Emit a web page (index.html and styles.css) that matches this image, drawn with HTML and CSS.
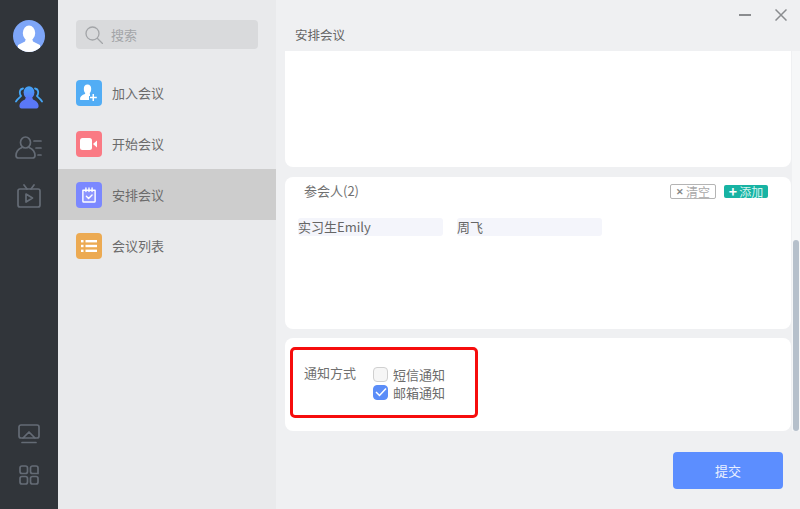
FILE: index.html
```html
<!DOCTYPE html>
<html lang="zh">
<head>
<meta charset="utf-8">
<title>安排会议</title>
<link rel="stylesheet" href="styles.css">
</head>
<body>
<div class="app">
  <nav class="rail">
    <svg class="avatar" viewBox="0 0 32 32" width="32" height="32">
      <defs><clipPath id="ac"><circle cx="16" cy="16" r="16"/></clipPath></defs>
      <circle cx="16" cy="16" r="16" fill="#7ea6f8"/>
      <g clip-path="url(#ac)" fill="#fff">
        <ellipse cx="16" cy="13" rx="6.2" ry="7.6"/>
        <path d="M13 18h6l1 3.500 7 3.500 1 7H4l1-7 7-3.500z"/>
      </g>
    </svg>
    <svg class="rail-icon first" viewBox="0 0 28 24" width="28" height="24">
      <defs><linearGradient id="pg" x1="0" y1="0" x2="0" y2="1"><stop offset="0" stop-color="#43a4f5"/><stop offset="1" stop-color="#5a78f8"/></linearGradient></defs>
      <path d="M8 2.500C4.500 3 4 7 6 10 4.500 12 2.500 13 1 15.500" fill="none" stroke="#45a5f5" stroke-width="1.800" stroke-linecap="round"/>
      <path d="M20 2.500C23.500 3 24 7 22 10 23.500 12 25.500 13 27 15.500" fill="none" stroke="#45a5f5" stroke-width="1.800" stroke-linecap="round"/>
      <ellipse cx="14" cy="6.500" rx="5.400" ry="6.200" fill="url(#pg)"/>
      <path d="M11 11h6l1 2.500c3 1 5 3 5.500 5.500.4 2-.5 3.500-2 3.500h-15c-1.500 0-2.400-1.500-2-3.500.5-2.500 2.500-4.500 5.500-5.500z" fill="#5a78f8"/>
    </svg>
    <svg class="rail-icon second" viewBox="0 0 28 24" width="28" height="24" fill="none" stroke="#646b75" stroke-width="1.700" stroke-linecap="round">
      <ellipse cx="10.500" cy="6.500" rx="5" ry="5.500"/>
      <path d="M7 11.500C3.500 13 1 15.500 1 19.500c0 1.800 1 2.500 2.500 2.500h14c1.500 0 2.500-.7 2.500-2.500 0-4-2.500-6.500-6-8"/>
      <path d="M19 5h7M21 12h5M23 19h3"/>
    </svg>
    <svg class="rail-icon third" viewBox="0 0 24 24" width="24" height="24" fill="none" stroke="#646b75" stroke-width="1.700" stroke-linecap="round" stroke-linejoin="round">
      <rect x="1" y="5" width="22" height="18" rx="2"/>
      <path d="M7 1l3 4M17 1l-3 4"/>
      <path d="M9 10l6.500 4-6.500 4z"/>
    </svg>
    <div class="rail-spacer"></div>
    <svg class="rail-icon cast" viewBox="0 0 22 20" width="22" height="20" fill="none" stroke="#646b75" stroke-width="1.700" stroke-linecap="round" stroke-linejoin="round">
      <path d="M5 14H3a2 2 0 0 1-2-2V3a2 2 0 0 1 2-2h16a2 2 0 0 1 2 2v9a2 2 0 0 1-2 2h-2"/>
      <path d="M5 14l6-6 6 6z"/>
      <path d="M4 18.500h14"/>
    </svg>
    <svg class="rail-icon apps" viewBox="0 0 20 20" width="20" height="20" fill="none" stroke="#646b75" stroke-width="1.700">
      <rect x="1" y="1" width="7.500" height="7.500" rx="2"/>
      <path d="M11.500 3a2 2 0 0 1 2-2H17a2 2 0 0 1 2 2v5.500h-5.500a2 2 0 0 1-2-2z"/>
      <rect x="1" y="11.500" width="7.500" height="7.500" rx="2"/>
      <rect x="11.500" y="11.500" width="7.500" height="7.500" rx="2"/>
    </svg>
  </nav>

  <aside class="side">
    <div class="search">
      <svg viewBox="0 0 18 18" width="18" height="18" fill="none" stroke="#a3a5a8" stroke-width="1.300" stroke-linecap="round">
        <circle cx="7.500" cy="7.500" r="6.500"/><path d="M12.500 12.500l5 5"/>
      </svg>
      <span>搜索</span>
    </div>
    <ul class="menu">
      <li class="menu-item">
        <span class="tile tile-blue">
          <svg viewBox="0 0 18 18" width="18" height="18" fill="#fff">
            <ellipse cx="7.500" cy="5" rx="3.700" ry="4.500"/>
            <path d="M5.500 8h4l.5 2.500v1.500H9V16H1c-.6 0-1-.4-1-1 0-2.500 2-4 5-5z"/>
            <path d="M12.500 10h1.500v2.700h2.800v1.500H14V17h-1.500v-2.800H10v-1.500h2.500z"/>
          </svg>
        </span>加入会议
      </li>
      <li class="menu-item">
        <span class="tile tile-red">
          <svg viewBox="0 0 18 12" width="18" height="12" fill="#fff">
            <rect x="0" y="0" width="12" height="12" rx="2.500"/>
            <path d="M13 6l4-3.500v7z"/>
          </svg>
        </span>开始会议
      </li>
      <li class="menu-item active">
        <span class="tile tile-violet">
          <svg viewBox="0 0 16 18" width="14" height="16" fill="none" stroke="#fff" stroke-width="1.600" stroke-linecap="round" stroke-linejoin="round">
            <path d="M1 3.500h14V16a1 1 0 0 1-1 1H2a1 1 0 0 1-1-1z" fill="#8c95ff"/>
            <path d="M4.500 1v4M8 1v4M11.500 1v4"/>
            <path d="M5 10.500l2.500 2.500 4-4"/>
          </svg>
        </span>安排会议
      </li>
      <li class="menu-item">
        <span class="tile tile-orange">
          <svg viewBox="0 0 16 12" width="16" height="12" fill="#fff">
            <rect x="0" y="0" width="2.500" height="2.400"/><rect x="4.500" y="0" width="11.500" height="2.400"/>
            <rect x="0" y="4.800" width="2.500" height="2.400"/><rect x="4.500" y="4.800" width="11.500" height="2.400"/>
            <rect x="0" y="9.600" width="2.500" height="2.400"/><rect x="4.500" y="9.600" width="11.500" height="2.400"/>
          </svg>
        </span>会议列表
      </li>
    </ul>
  </aside>

  <main class="main">
    <header class="top">
      <h1>安排会议</h1>
      <div class="win">
        <svg viewBox="0 0 12 2" width="12" height="2"><rect width="12" height="2" fill="#8a8c8f"/></svg>
        <svg viewBox="0 0 12 12" width="12" height="12" fill="none" stroke="#8a8c8f" stroke-width="1.500"><path d="M.5.500l11 11M11.500.500l-11 11"/></svg>
      </div>
    </header>

    <section class="card card-blank"></section>

    <section class="card card-people">
      <div class="people-head">
        <span class="people-title">参会人(2)</span>
        <span class="btn-clear"><i class="x">✕</i>清空</span>
        <span class="btn-add"><i class="plus">+</i>添加</span>
      </div>
      <div class="people">
        <span class="person">实习生Emily</span>
        <span class="person">周飞</span>
      </div>
    </section>

    <section class="card card-notify">
      <span class="notify-label">通知方式</span>
      <div class="options">
        <label class="option"><span class="check"></span>短信通知</label>
        <label class="option"><span class="check on">
          <svg viewBox="0 0 12 10" width="12" height="10" fill="none" stroke="#fff" stroke-width="1.500"><path d="M1 5l3.500 3.500L11 1.500"/></svg>
        </span>邮箱通知</label>
      </div>
    </section>

    <footer class="foot"><button class="submit">提交</button></footer>

    <div class="highlight"></div>
    <div class="scroll-track"><div class="scroll-thumb"></div></div>
  </main>
</div>
</body>
</html>
```

FILE: styles.css
```css
* { box-sizing: border-box; }
html, body { margin: 0; height: 100%; }
body {
  font-family: "Noto Sans CJK SC", "Noto Sans", sans-serif;
  font-size: 13px;
  color: #666;
  background: #eff0f2;
  overflow: hidden;
}
.app { display: flex; width: 800px; height: 509px; }

.rail {
  width: 58px;
  flex: none;
  background: #31353a;
  display: flex;
  flex-direction: column;
  align-items: center;
  padding-top: 20px;
}
.avatar { display: block; }
.rail-icon { display: block; flex: none; }
.first { margin-top: 34px; }
.second { margin-top: 26px; }
.third { margin-top: 24px; }
.rail-spacer { flex: 1; }
.cast { margin-bottom: 21px; }
.apps { margin-bottom: 24px; }

.side {
  width: 218px;
  flex: none;
  background: #e9eaec;
  padding-top: 20px;
}
.search {
  width: 182px;
  height: 29px;
  margin-left: 18px;
  background: #d9dadc;
  border-radius: 4px;
  display: flex;
  align-items: center;
  gap: 8px;
  padding-left: 9px;
  color: #a3a5a8;
  font-size: 13px;
}
.menu { list-style: none; margin: 18px 0 0; padding: 0; }
.menu-item {
  height: 51px;
  display: flex;
  align-items: center;
  gap: 10px;
  padding-left: 18px;
  font-size: 13px;
  color: #6b6b6b;
}
.menu-item.active { background: #cdcdcd; }
.tile {
  width: 26px;
  height: 26px;
  border-radius: 4px;
  display: flex;
  align-items: center;
  justify-content: center;
  flex: none;
}
.tile-blue { background: #52adf5; }
.tile-red { background: #fa7a84; }
.tile-violet { background: #7b88ff; }
.tile-orange { background: #ecaa52; }

.main {
  position: relative;
  flex: 1;
  display: flex;
  flex-direction: column;
  padding-left: 9px;
  padding-right: 9px;
  background: #eff0f2;
}
.top {
  height: 51px;
  flex: none;
  display: flex;
  justify-content: space-between;
  padding-left: 10px;
}
.top h1 {
  margin: 26px 0 0;
  font-size: 12.500px;
  line-height: 17px;
  font-weight: 400;
  color: #666;
}
.win {
  display: flex;
  align-items: center;
  gap: 24px;
  height: 12px;
  margin-top: 9px;
  margin-right: 4px;
}
.card { background: #fff; flex: none; }
.card-blank { height: 116px; border-radius: 0 0 8px 8px; }
.card-people { height: 152px; margin-top: 10px; border-radius: 8px; padding: 6px 23px 0 13px; }
.people-head { display: flex; align-items: center; height: 16px; }
.people-title { flex: 1; padding: 0 0 2px 6px; color: #707070; }
.btn-clear {
  width: 46px;
  height: 15px;
  border: 1px solid #b4b4b4;
  border-radius: 2px;
  color: #a8a8a8;
  font-size: 12px;
  line-height: 13px;
  display: flex;
  align-items: center;
  justify-content: center;
}
.x { font-style: normal; font-size: 9px; color: #888; margin-right: 2px; font-weight: 700; }
.btn-add {
  width: 44px;
  height: 13px;
  margin-left: 8px;
  background: #17b3a3;
  border-radius: 2px;
  color: #d6f3ef;
  font-size: 12px;
  line-height: 13px;
  display: flex;
  align-items: center;
  justify-content: center;
}
.plus { font-style: normal; font-size: 14px; font-weight: 700; color: #fff; margin-right: 2px; }
.people { display: flex; gap: 14px; margin-top: 19px; }
.person {
  width: 145px;
  height: 18px;
  background: #f4f5fb;
  border-radius: 3px;
  font-size: 13px;
  line-height: 18px;
  color: #666;
}
.card-notify {
  height: 93px;
  margin-top: 9px;
  border-radius: 8px;
  padding: 26px 0 0 19px;
  display: flex;
  align-items: flex-start;
}
.notify-label { line-height: 17px; color: #707070; }
.options { display: flex; flex-direction: column; margin-left: 17px; padding-top: 1px; }
.option {
  display: flex;
  align-items: center;
  gap: 5px;
  height: 18px;
  color: #6b6b6b;
}
.check {
  width: 15px;
  height: 15px;
  border-radius: 4px;
  border: 1px solid #d0d0d0;
  background: #f6f6f6;
  display: flex;
  align-items: center;
  justify-content: center;
}
.check.on { background: #5b8df8; border-color: #5b8df8; }
.foot { flex: 1; display: flex; justify-content: flex-end; align-items: flex-start; padding: 21px 8px 0 0; }
.submit {
  width: 110px;
  height: 37px;
  border: 0;
  border-radius: 4px;
  background: #5c8eff;
  color: #eaf0ff;
  font: inherit;
  font-size: 13px;
}

.highlight {
  position: absolute;
  left: 14px;
  top: 347px;
  width: 188px;
  height: 71px;
  border: 3px solid #f60d0d;
  border-radius: 5px;
}
.scroll-track {
  position: absolute;
  right: 0;
  top: 51px;
  bottom: 78px;
  width: 8px;
  background: #f6f7f8;
}
.scroll-thumb {
  position: absolute;
  left: 1px;
  right: 1px;
  top: 189px;
  bottom: 0;
  border-radius: 3px;
  background: #b6c0cb;
}
```
